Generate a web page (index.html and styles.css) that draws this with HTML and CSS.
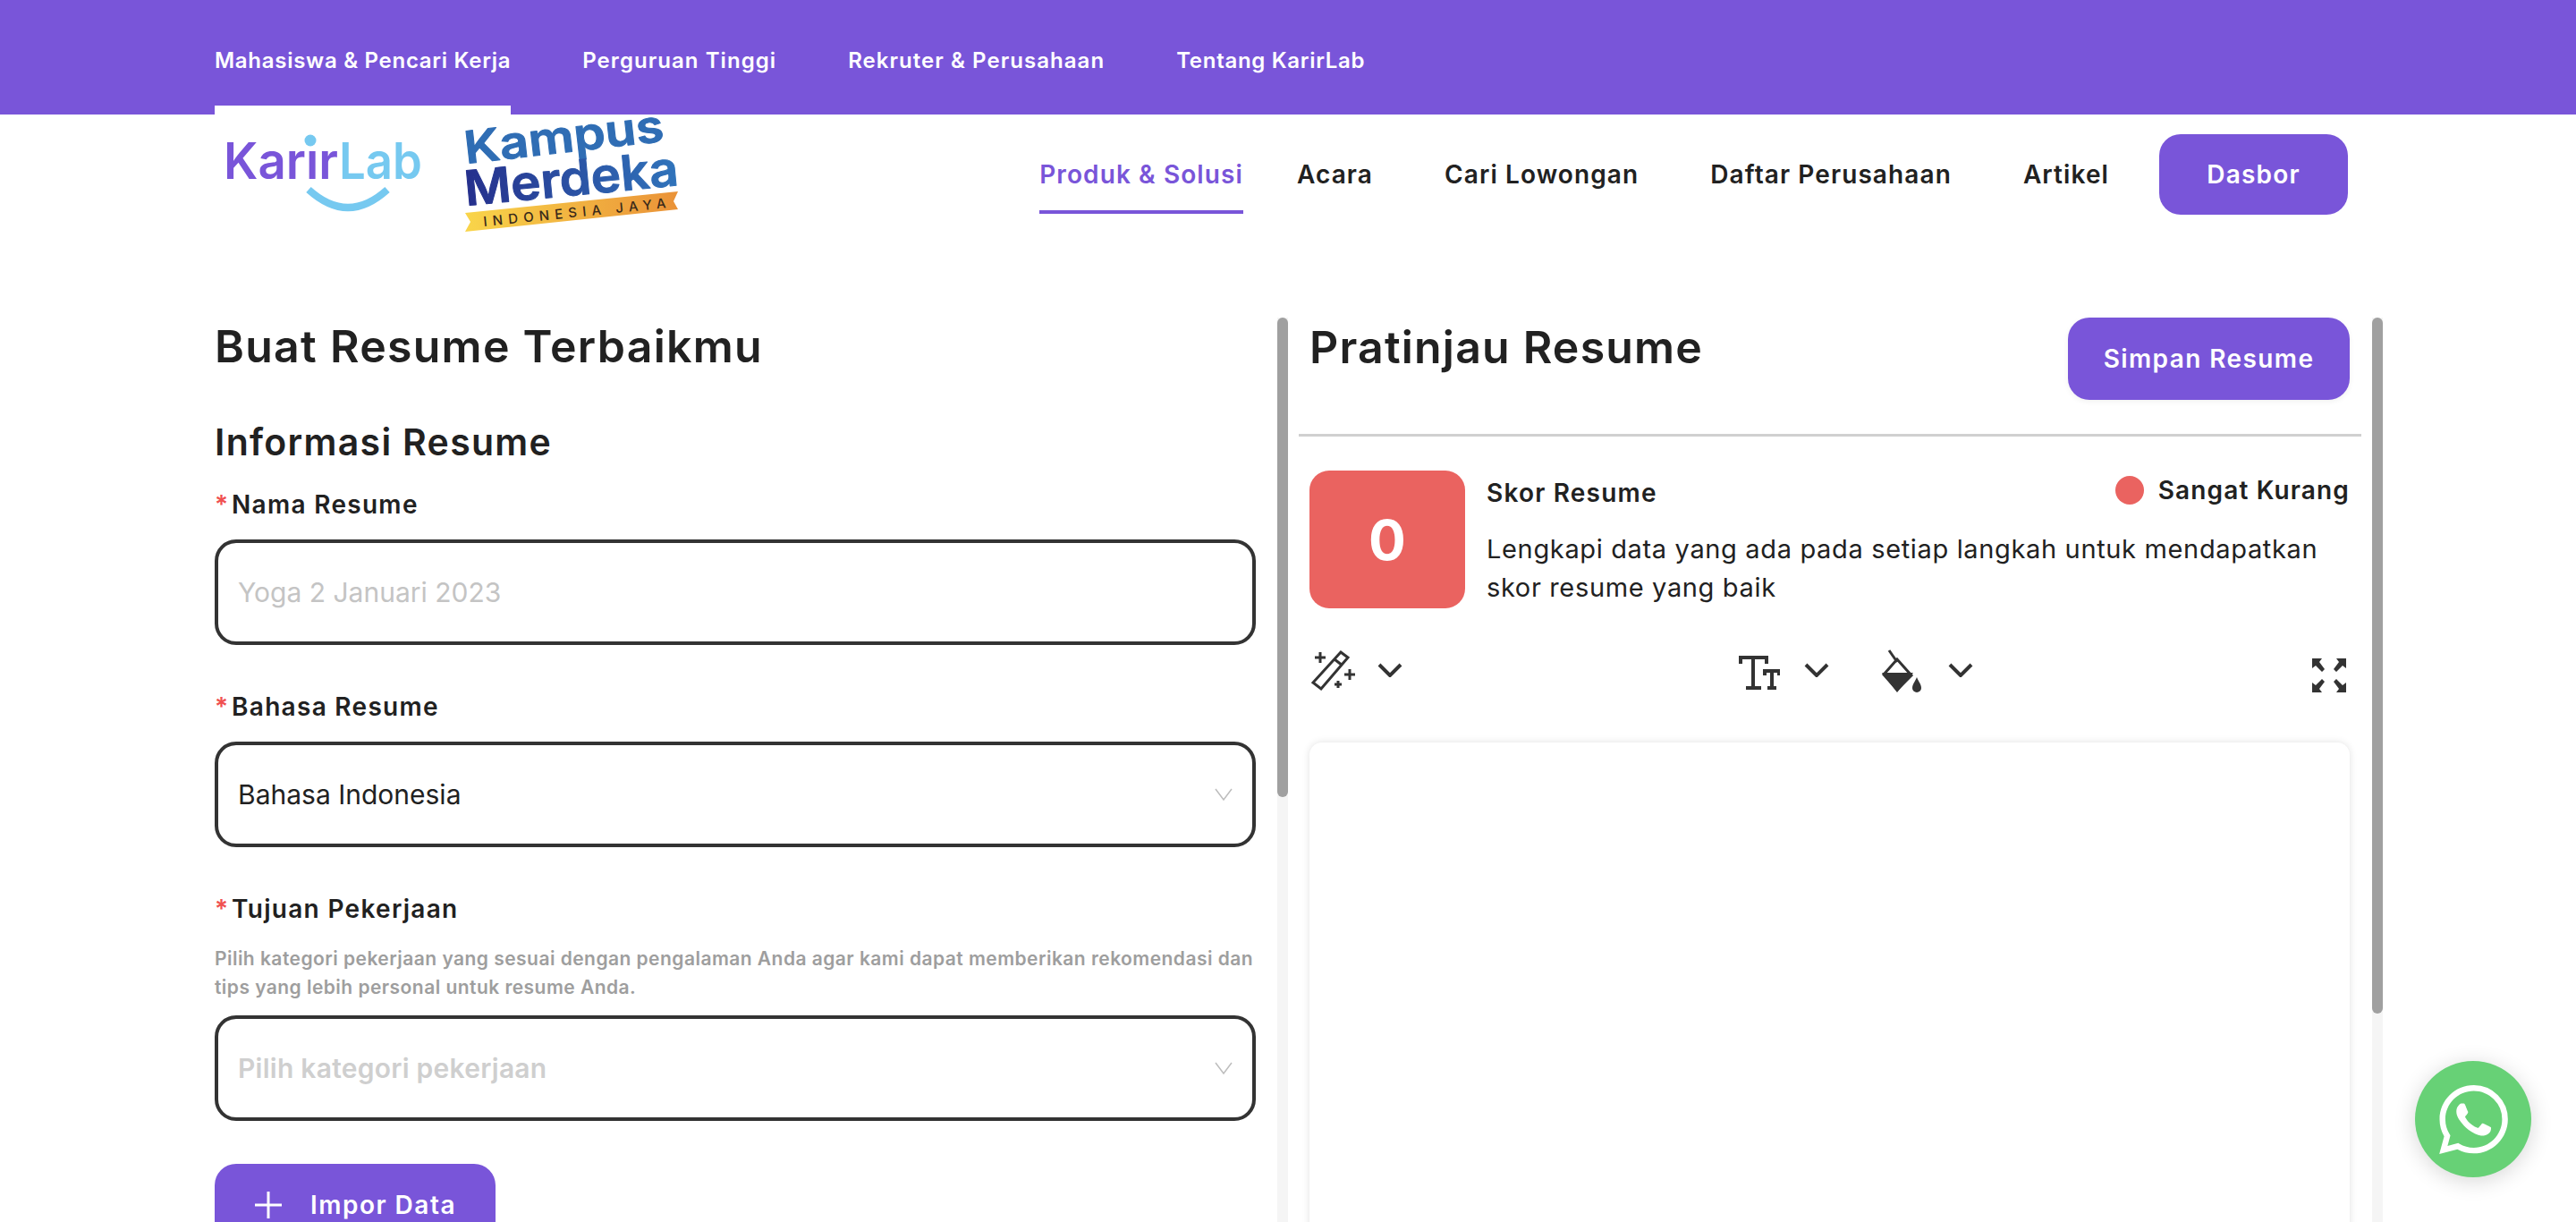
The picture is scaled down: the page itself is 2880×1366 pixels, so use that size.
FILE: index.html
```html
<!DOCTYPE html>
<html lang="id">
<head>
    <meta charset="UTF-8">
    <meta name="viewport" content="width=device-width, initial-scale=1.0">
    <title>Buat Resume - KarirLab</title>
    <link rel="stylesheet" href="styles.css">
</head>
<body>

    <!-- Top audience bar -->
    <div class="topbar">
        <a class="topbar-link active">Mahasiswa &amp; Pencari Kerja</a>
        <a class="topbar-link">Perguruan Tinggi</a>
        <a class="topbar-link">Rekruter &amp; Perusahaan</a>
        <a class="topbar-link topbar-last">Tentang KarirLab</a>
    </div>

    <!-- Logos and main nav -->
    <header class="header">
        <div class="logos">
            <svg class="logo-karir" viewBox="0 0 240 112" role="img" aria-label="KarirLab">
                <text x="10" y="72" class="karir-text" fill="#7955d9" textLength="128" lengthAdjust="spacingAndGlyphs">Karir</text>
                <text x="139" y="72" class="karir-text" fill="#76c9f0" textLength="93" lengthAdjust="spacingAndGlyphs">Lab</text>
                <rect x="100" y="30" width="14" height="9" fill="#fff"/>
                <circle cx="107" cy="29" r="6.5" fill="#76c9f0"/>
                <path d="M105 84 Q149 124 193 84" fill="none" stroke="#76c9f0" stroke-width="8"/>
            </svg>
            <svg class="logo-kampus" viewBox="0 0 250 135" role="img" aria-label="Kampus Merdeka Indonesia Jaya">
                <defs>
                    <linearGradient id="merdeka-fill" x1="0" x2="1" y1="0" y2="0">
                        <stop offset="0" stop-color="#252f8c"/>
                        <stop offset="1" stop-color="#3074bb"/>
                    </linearGradient>
                    <linearGradient id="banner-fill" x1="0" x2="1" y1="0" y2="0">
                        <stop offset="0" stop-color="#f9d54a"/>
                        <stop offset="1" stop-color="#ea9238"/>
                    </linearGradient>
                </defs>
                <text class="kampus-text kampus-top" transform="translate(6 55) rotate(-6.5)" fill="#2f6db4" stroke="#2f6db4" textLength="224" lengthAdjust="spacingAndGlyphs">Kampus</text>
                <text class="kampus-text" transform="translate(6 102) rotate(-5.5)" fill="url(#merdeka-fill)" stroke="url(#merdeka-fill)" textLength="240" lengthAdjust="spacingAndGlyphs">Merdeka</text>
                <polygon points="5,110 11,120 5,131 243,106 238,97 243,86" fill="url(#banner-fill)"/>
                <text class="banner-text" transform="translate(26 125) rotate(-5.8)" fill="#3a2a1a" textLength="205">INDONESIA JAYA</text>
            </svg>
        </div>
        <nav class="nav">
            <a class="nav-link active">Produk &amp; Solusi</a>
            <a class="nav-link">Acara</a>
            <a class="nav-link">Cari Lowongan</a>
            <a class="nav-link">Daftar Perusahaan</a>
            <a class="nav-link">Artikel</a>
            <a class="btn btn-dasbor">Dasbor</a>
        </nav>
    </header>

    <main class="main">
        <!-- Form column -->
        <section class="form-col">
            <h1 class="form-title">Buat Resume Terbaikmu</h1>
            <h2 class="form-subtitle">Informasi Resume</h2>

            <div class="field">
                <label class="field-label"><span class="req">*</span>Nama Resume</label>
                <input class="control control-input" type="text" placeholder="Yoga 2 Januari 2023">
            </div>

            <div class="field">
                <label class="field-label"><span class="req">*</span>Bahasa Resume</label>
                <div class="control">
                    <span>Bahasa Indonesia</span>
                    <svg class="select-arrow" viewBox="0 0 20 14"><polyline points="1,1 10,13 19,1"/></svg>
                </div>
            </div>

            <div class="field">
                <label class="field-label"><span class="req">*</span>Tujuan Pekerjaan</label>
                <p class="field-hint">Pilih kategori pekerjaan yang sesuai dengan pengalaman Anda agar kami dapat memberikan rekomendasi dan tips yang lebih personal untuk resume Anda.</p>
                <div class="control">
                    <span class="placeholder">Pilih kategori pekerjaan</span>
                    <svg class="select-arrow" viewBox="0 0 20 14"><polyline points="1,1 10,13 19,1"/></svg>
                </div>
            </div>

            <a class="btn btn-import">
                <svg class="plus-icon" viewBox="0 0 32 32"><path d="M16 1V31M1 16H31"/></svg>
                Impor Data
            </a>
        </section>
        <div class="scroll-track"><div class="scroll-thumb thumb-left"></div></div>

        <!-- Preview column -->
        <section class="preview-col">
            <div class="preview-head">
                <h2 class="preview-title">Pratinjau Resume</h2>
                <a class="btn btn-save">Simpan Resume</a>
            </div>
            <hr class="divider">

            <div class="score">
                <div class="score-box">0</div>
                <div class="score-info">
                    <div class="score-top">
                        <span class="score-name">Skor Resume</span>
                        <span class="score-level"><i class="score-dot"></i>Sangat Kurang</span>
                    </div>
                    <p class="score-text">Lengkapi data yang ada pada setiap langkah untuk mendapatkan skor resume yang baik</p>
                </div>
            </div>

            <div class="toolbar">
                <div class="tool tool-template">
                    <svg class="icon-wand" viewBox="0 0 50 48">
                        <path class="line" d="M34 4L42 10L12 45L3 38ZM27 12L36 19"/>
                        <path class="line" d="M11 4V16M5 10H17M44 23V35M38 29H50M31 36V44M27 40H35"/>
                    </svg>
                    <svg class="chevron" viewBox="0 0 28 16"><polyline points="2,2 14,14 26,2"/></svg>
                </div>
                <div class="tool tool-font">
                    <svg class="icon-font" viewBox="0 0 46 38">
                        <path class="line-thick" d="M2 9V2H31V9M16 2V36M8 36H25M29 22V17H45V22M37 17V36M32 36H42"/>
                    </svg>
                    <svg class="chevron" viewBox="0 0 28 16"><polyline points="2,2 14,14 26,2"/></svg>
                </div>
                <div class="tool tool-color">
                    <svg class="icon-fill" viewBox="0 0 48 50">
                        <path class="line" d="M10 2L19 15"/>
                        <path class="line" d="M19 12L4 29L19 46L35 30Z"/>
                        <path d="M2 27H37L19 49Z" fill="#333"/>
                        <path d="M41 32C39 37 36 40 36 44A5 5 0 0 0 46 44C46 40 43 37 41 32Z" fill="#333"/>
                    </svg>
                    <svg class="chevron" viewBox="0 0 28 16"><polyline points="2,2 14,14 26,2"/></svg>
                </div>
                <svg class="icon-expand" viewBox="0 0 38 38">
                    <path d="M0 0H11L8 4L14 12L11 15L4 8L0 11Z" fill="#333"/>
                    <path d="M38 0H27L30 4L24 12L27 15L34 8L38 11Z" fill="#333"/>
                    <path d="M0 38H11L8 34L14 26L11 23L4 30L0 27Z" fill="#333"/>
                    <path d="M38 38H27L30 34L24 26L27 23L34 30L38 27Z" fill="#333"/>
                </svg>
            </div>

            <div class="paper"></div>
        </section>
        <div class="scroll-track"><div class="scroll-thumb thumb-right"></div></div>
    </main>

    <!-- WhatsApp floating button -->
    <a class="wa-button">
        <svg class="wa-icon" viewBox="0 0 24 24"><path d="M17.472 14.382c-.297-.149-1.758-.867-2.03-.967-.273-.099-.471-.148-.67.15-.197.297-.767.966-.94 1.164-.173.199-.347.223-.644.075-.297-.15-1.255-.463-2.39-1.475-.883-.788-1.48-1.761-1.653-2.059-.173-.297-.018-.458.13-.606.134-.133.298-.347.446-.52.149-.174.198-.298.298-.497.099-.198.05-.371-.025-.52-.075-.149-.669-1.612-.916-2.207-.242-.579-.487-.5-.669-.51-.173-.008-.371-.01-.57-.01-.198 0-.52.074-.792.372-.272.297-1.04 1.016-1.04 2.479 0 1.462 1.065 2.875 1.213 3.074.149.198 2.096 3.2 5.077 4.487.709.306 1.262.489 1.694.625.712.227 1.36.195 1.871.118.571-.085 1.758-.719 2.006-1.413.248-.694.248-1.289.173-1.413-.074-.124-.272-.198-.57-.347m-5.421 7.403h-.004a9.87 9.87 0 01-5.031-1.378l-.361-.214-3.741.982.998-3.648-.235-.374a9.86 9.86 0 01-1.51-5.26c.001-5.45 4.436-9.884 9.888-9.884 2.64 0 5.122 1.03 6.988 2.898a9.825 9.825 0 012.893 6.994c-.003 5.45-4.437 9.884-9.885 9.884m8.413-18.297A11.815 11.815 0 0012.05 0C5.495 0 .16 5.335.157 11.892c0 2.096.547 4.142 1.588 5.945L.057 24l6.305-1.654a11.882 11.882 0 005.683 1.448h.005c6.554 0 11.89-5.335 11.893-11.893a11.821 11.821 0 00-3.48-8.413z"/></svg>
    </a>

</body>
</html>
```

FILE: styles.css
```css
* {
    box-sizing: border-box;
}
body {
    font-family: Inter, "Open Sans", sans-serif;
    margin: 0;
    height: 1366px;
    overflow: hidden;
    background-color: #fff;
    color: #212121;
}
h1, h2, p {
    margin: 0;
}

/* top bar */
.topbar {
    display: flex;
    gap: 80px;
    height: 128px;
    padding-left: 240px;
    background-color: #7955d9;
}
.topbar-link {
    display: flex;
    align-items: center;
    height: 128px;
    padding-top: 16px;
    border-bottom: 10px solid transparent;
    font-size: 24px;
    font-weight: 600;
    letter-spacing: 1.05px;
    color: #fff;
    white-space: nowrap;
}
.topbar-link.active {
    border-bottom-color: #fff;
    letter-spacing: 0.72px;
}
.topbar-last {
    letter-spacing: 0.7px;
}

/* header */
.header {
    display: flex;
    justify-content: space-between;
    height: 227px;
    padding: 22px 255px 0 240px;
}
.logos {
    display: flex;
    gap: 35px;
    margin-top: -22px;
}
.logo-karir {
    width: 240px;
    height: 112px;
    overflow: visible;
}
.logo-kampus {
    width: 250px;
    height: 135px;
    overflow: visible;
}
.karir-text {
    font-size: 56px;
    font-weight: 600;
}
.kampus-text {
    font-size: 54px;
    font-weight: 600;
    stroke-width: 1;
    stroke-linejoin: round;
}
.kampus-top {
    font-size: 50px;
}
.banner-text {
    font-size: 15px;
    font-weight: 500;
}
.nav {
    display: flex;
    align-items: flex-start;
    gap: 80px;
}
.nav-link {
    display: flex;
    align-items: center;
    height: 89px;
    font-size: 28px;
    font-weight: 600;
    letter-spacing: 1.1px;
    white-space: nowrap;
}
.nav-link.active {
    margin-right: -20px;
    padding-top: 4px;
    color: #7955d9;
    border-bottom: 4px solid #7955d9;
}

/* buttons */
.btn {
    display: flex;
    align-items: center;
    justify-content: center;
    background-color: #7955d9;
    color: #fff;
    font-weight: 600;
    border-radius: 24px;
    white-space: nowrap;
}
.btn-dasbor {
    width: 211px;
    height: 90px;
    margin-left: -24px;
    font-size: 28px;
    letter-spacing: 1.2px;
}
.btn-save {
    width: 315px;
    height: 92px;
    font-size: 28px;
    letter-spacing: 1.4px;
    box-shadow: 0 2px 6px rgba(0, 0, 0, 0.06);
}
.btn-import {
    gap: 31px;
    width: 314px;
    height: 92px;
    margin-top: -1px;
    font-size: 28px;
    letter-spacing: 1.5px;
}
.plus-icon {
    width: 32px;
    height: 32px;
    fill: none;
    stroke: #fff;
    stroke-width: 3;
}

/* main layout */
.main {
    display: flex;
    height: 1011px;
    padding-left: 240px;
}
.form-col {
    width: 1164px;
    margin-right: 24px;
}
.preview-col {
    width: 1188px;
    margin: 0 12px;
}
.scroll-track {
    width: 12px;
    height: 100%;
    background-color: #f5f5f5;
}
.scroll-thumb {
    background-color: #a0a0a0;
    border-radius: 6px;
}
.thumb-left {
    height: 536px;
}
.thumb-right {
    height: 778px;
}

/* form column */
.form-title {
    height: 64px;
    font-size: 50px;
    line-height: 64px;
    font-weight: 600;
    letter-spacing: 1.27px;
}
.form-subtitle {
    height: 44px;
    margin-top: 53px;
    font-size: 41px;
    line-height: 44px;
    font-weight: 600;
    letter-spacing: 1.3px;
}
.field {
    margin-bottom: 49px;
}
.form-subtitle + .field {
    margin-top: 28px;
}
.field-label {
    display: block;
    height: 40px;
    margin-bottom: 19px;
    font-size: 28px;
    line-height: 40px;
    font-weight: 600;
    letter-spacing: 1.3px;
}
.req {
    display: inline-block;
    width: 19px;
    color: #f05050;
}
.field-hint {
    margin-bottom: 15px;
    padding-top: 1px;
    font-size: 21px;
    line-height: 32px;
    font-weight: 600;
    color: #9e9e9e;
    letter-spacing: 0.46px;
}
.control {
    display: flex;
    align-items: center;
    justify-content: space-between;
    width: 100%;
    height: 118px;
    padding: 0 22px 0 22px;
    border: 4px solid #333;
    border-radius: 24px;
    background-color: #fff;
    font-family: inherit;
    font-size: 30px;
    color: #212121;
}
.control-input::placeholder {
    color: #c4c4c4;
    opacity: 1;
}
.placeholder {
    color: #cfcfcf;
    font-weight: 600;
    letter-spacing: 0.25px;
}
.select-arrow {
    width: 20px;
    height: 14px;
    fill: none;
    stroke: #bdbdbd;
    stroke-width: 1.5;
}

/* preview column */
.preview-head {
    display: flex;
    justify-content: space-between;
    padding: 0 13px 0 12px;
}
.preview-title {
    font-size: 50px;
    line-height: 66px;
    font-weight: 600;
    letter-spacing: 1.2px;
}
.divider {
    height: 3px;
    margin: 38px 0 38px;
    border: none;
    background-color: #d0d0d0;
}
.score {
    display: flex;
    gap: 24px;
    padding: 0 13px 0 12px;
}
.score-box {
    display: flex;
    align-items: center;
    justify-content: center;
    flex: none;
    width: 174px;
    height: 154px;
    background-color: #ea6360;
    border-radius: 22px;
    color: #fff;
    font-size: 62px;
    font-weight: 700;
}
.score-info {
    flex: 1;
}
.score-top {
    display: flex;
    justify-content: space-between;
    height: 50px;
    align-items: center;
}
.score-name {
    font-size: 28px;
    font-weight: 600;
    letter-spacing: 1.2px;
}
.score-level {
    display: flex;
    align-items: center;
    gap: 16px;
    font-size: 28px;
    font-weight: 600;
    letter-spacing: 1.15px;
    margin-top: -6px;
}
.score-dot {
    width: 32px;
    height: 32px;
    background-color: #ea6360;
    border-radius: 50%;
}
.score-text {
    margin-top: 16px;
    font-size: 29px;
    line-height: 43px;
    letter-spacing: 0.65px;
    width: 960px;
}

/* toolbar */
.toolbar {
    display: flex;
    align-items: flex-start;
    height: 105px;
    margin-top: 45px;
    padding-left: 13px;
}
.tool {
    display: flex;
    align-items: flex-start;
}
.tool .chevron {
    margin-top: 16px;
}
.tool-template {
    gap: 25px;
    margin-right: 376px;
}
.tool-font {
    gap: 27px;
    margin-top: 8px;
    margin-right: 57px;
}
.tool-font .chevron {
    margin-top: 8px;
}
.tool-color {
    gap: 28px;
}
.chevron {
    width: 28px;
    height: 16px;
    fill: none;
    stroke: #333;
    stroke-width: 4;
}
.line {
    fill: none;
    stroke: #333;
    stroke-width: 3;
}
.line-thick {
    fill: none;
    stroke: #333;
    stroke-width: 4;
}
.icon-wand {
    width: 50px;
    height: 48px;
}
.icon-font {
    width: 46px;
    height: 38px;
}
.icon-fill {
    width: 48px;
    height: 50px;
}
.icon-expand {
    width: 38px;
    height: 38px;
    margin: 11px 0 0 379px;
}
.paper {
    height: 800px;
    margin: 0 13px 0 12px;
    background-color: #fff;
    border-radius: 14px;
    box-shadow: 0 0 8px rgba(0, 0, 0, 0.12);
}

/* whatsapp */
.wa-button {
    position: fixed;
    left: 2700px;
    top: 1186px;
    display: flex;
    align-items: center;
    justify-content: center;
    width: 130px;
    height: 130px;
    background-color: #67d176;
    border-radius: 50%;
    box-shadow: 0 4px 24px rgba(0, 0, 0, 0.16);
}
.wa-icon {
    width: 77px;
    height: 77px;
    fill: #fff;
}
```
